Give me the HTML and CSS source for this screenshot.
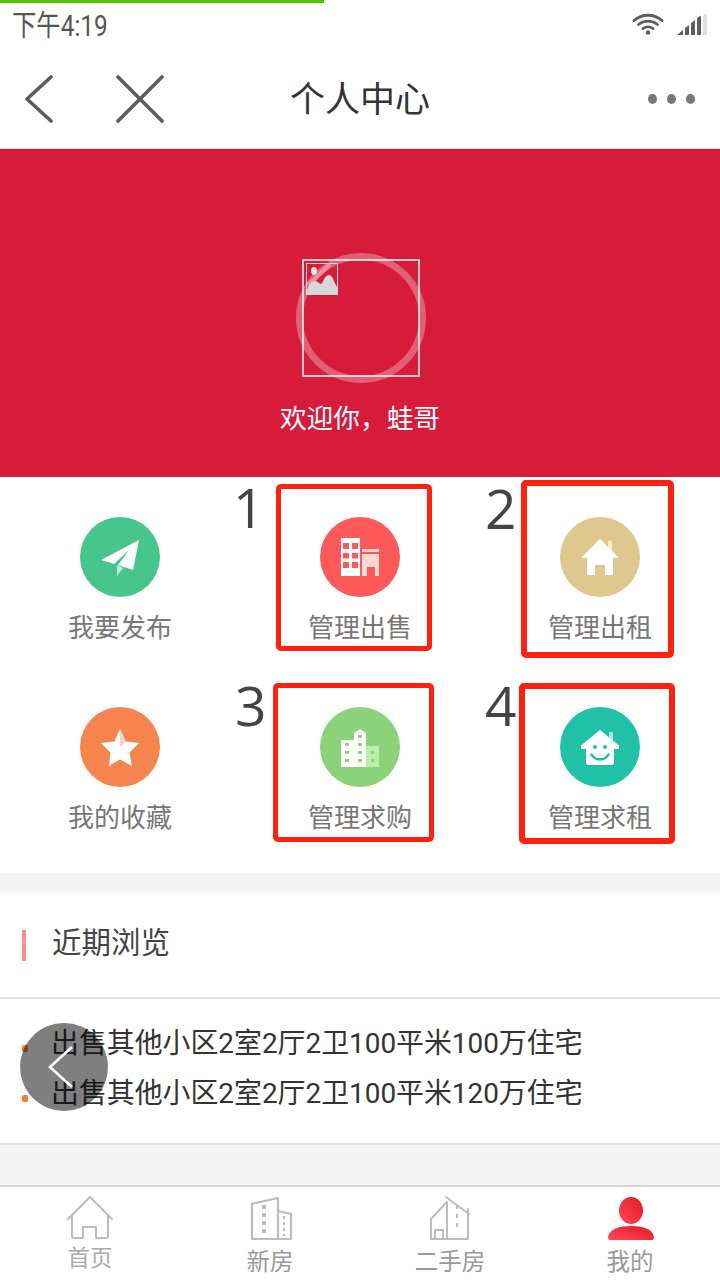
FILE: index.html
```html
<!DOCTYPE html>
<html lang="zh-CN">
<head>
<meta charset="utf-8">
<title>个人中心</title>
<link rel="stylesheet" href="styles.css">
</head>
<body>
<div class="page">
  <div class="progress"></div>
  <div class="status">
    <span class="time">下午4:19</span>
    <div class="status-icons">
      <svg class="wifi" width="32" height="22" viewBox="0 0 32 22"><g fill="none" stroke="#5f5f5f" stroke-width="2.8" stroke-linecap="round"><path d="M2 7.5C10 .5 22 .5 30 7.5"/><path d="M6.5 11.5C12 7 20 7 25.5 11.5"/><path d="M11 15.5C14 13.5 18 13.5 21 15.5"/></g><circle cx="16" cy="19.5" r="2.3" fill="#5f5f5f"/></svg>
      <svg class="signal" width="31" height="21" viewBox="0 0 31 21"><path fill="#5f5f5f" d="M0 21 6 16V21ZM8 21V14L12 11V21ZM14 21V9L18 6V21ZM20 21V4L24 1.5V21Z"/><path fill="#e2e2e2" d="M26 21V0L30 0V21Z"/></svg>
    </div>
  </div>
  <header class="nav">
    <div class="nav-left">
      <svg width="28" height="48" viewBox="0 0 28 48"><path d="M26 2 2 24 26 46" fill="none" stroke="#5c5c5c" stroke-width="3.6" stroke-linecap="round" stroke-linejoin="round"/></svg>
      <svg width="48" height="48" viewBox="0 0 48 48"><path d="M2 2 46 46M46 2 2 46" fill="none" stroke="#5c5c5c" stroke-width="3.6" stroke-linecap="round"/></svg>
    </div>
    <h1 class="nav-title">个人中心</h1>
    <div class="nav-more"><i></i><i></i><i></i></div>
  </header>
  <section class="hero">
    <div class="avatar">
      <div class="avatar-ring"></div>
      <svg class="broken" width="32" height="32" viewBox="0 0 32 32"><rect x=".5" y=".5" width="31" height="31" fill="none" stroke="#d8d8d8"/><path d="M2 22 24 1" stroke="#ef8f9f" stroke-width="4" fill="none"/><path d="M1 31V27C3 22 5 18 9 18 12 18 13 21 15 21 17 21 18 12 23 12 27 12 28 20 31 24V31Z" fill="#d8d8d8"/><ellipse cx="8" cy="8" rx="3" ry="4" fill="#e4e4e4"/></svg>
    </div>
    <p class="welcome">欢迎你，蛙哥</p>
  </section>
  <section class="grid">
    <a class="cell"><span class="ic ic-green"><svg width="80" height="80" viewBox="0 0 80 80"><path fill="#fff" d="M59 23 21 43 34 47 49 33 38 48 53 53Z"/><path fill="#b8eed4" d="M37 48V59L43 51Z"/></svg></span><span class="lbl">我要发布</span></a>
    <a class="cell"><span class="ic ic-red"><svg width="80" height="80" viewBox="0 0 80 80"><path fill="#fff" d="M21 21H40V59H21Z"/><path fill="#ff5858" d="M23 26H29V32H23ZM32 26H38V32H32ZM23 36H29V41.500H23ZM32 36H38V41.500H32ZM23 45H29V51H23ZM32 45H38V51H32Z"/><path fill="#ffd9d0" d="M42 32H59V35H42ZM42 37H59V59H42Z"/><path fill="#ff5858" d="M47 50H55V59H47Z"/></svg></span><span class="lbl">管理出售</span></a>
    <a class="cell"><span class="ic ic-sand"><svg width="80" height="80" viewBox="0 0 80 80"><path fill="#fbeec8" d="M48 24H52V35H48Z"/><path fill="#fff" d="M40 22 59 41H53V58H45V48H35V58H27V41H21Z"/></svg></span><span class="lbl">管理出租</span></a>
    <a class="cell"><span class="ic ic-orange"><svg width="80" height="80" viewBox="0 0 80 80"><path fill="#fff" d="M40 22 45.800 34.500 59 36 49.500 45.500 52 59 40 52.500 29 59 30.500 45.500 21 36 34.500 34.500Z"/><path fill="#fcd3c3" d="M40 22 45.800 34.500 40 40Z"/></svg></span><span class="lbl">我的收藏</span></a>
    <a class="cell"><span class="ic ic-lime"><svg width="80" height="80" viewBox="0 0 80 80"><path fill="#fff" d="M21 33H34V26L40 22 46 26V60H21Z"/><path fill="#b8f0a8" d="M46 39H59V60H46Z"/><path fill="#8bd27a" d="M25 36H29V39H25ZM25 44H29V47H25ZM25 52H29V55H25ZM38 28H42V31H38ZM38 36H42V39H38ZM38 44H42V47H38ZM38 52H42V55H38ZM51 44H54V47H51ZM51 52H54V55H51Z"/></svg></span><span class="lbl">管理求购</span></a>
    <a class="cell"><span class="ic ic-teal"><svg width="80" height="80" viewBox="0 0 80 80"><path fill="#a7ecdc" d="M49 25H53V36H49Z"/><path fill="#fff" d="M40 23 59 38.500V42H54V55A3 3 0 0 1 51 58H29A3 3 0 0 1 26 55V42H21V38.500Z"/><circle cx="35" cy="40" r="2" fill="#20c1a7"/><circle cx="45" cy="40" r="2" fill="#20c1a7"/><path d="M31.500 47.500C35 54 45 54 48.500 47.500" fill="none" stroke="#20c1a7" stroke-width="2.600" stroke-linecap="round"/></svg></span><span class="lbl">管理求租</span></a>
  </section>
  <div class="gap"></div>
  <section class="recent">
    <h2 class="recent-title"><span class="recent-bar"></span><span class="recent-text">近期浏览</span></h2>
    <ul class="recent-list">
      <li class="recent-item"><i class="dot"></i><span class="recent-link">出售其他小区2室2厅2卫100平米100万住宅</span></li>
      <li class="recent-item"><i class="dot"></i><span class="recent-link">出售其他小区2室2厅2卫100平米120万住宅</span></li>
    </ul>
  </section>
  <div class="filler"></div>
  <nav class="tabs">
    <a class="tab">
      <svg width="48" height="46" viewBox="0 0 48 46"><path d="M2 24 24 2 46 24M6 21V41A2 2 0 0 0 8 43H17V32H30V43H40A2 2 0 0 0 42 41V21" fill="none" stroke="#bcbcbc" stroke-width="2" stroke-linejoin="round" stroke-linecap="round"/></svg>
      <span class="tab-lbl-first">首页</span>
    </a>
    <a class="tab">
      <svg width="48" height="46" viewBox="0 0 48 46"><path d="M5 9 32 3V44H6V9M32 16 45 19V44H32" fill="none" stroke="#bcbcbc" stroke-width="2.200" stroke-linejoin="round"/><path d="M18 10V40" stroke="#bcbcbc" stroke-width="4" stroke-dasharray="4 4" fill="none"/><path d="M38 21V41" stroke="#bcbcbc" stroke-width="2" stroke-dasharray="3 3" fill="none"/></svg>
      <span class="tab-lbl">新房</span>
    </a>
    <a class="tab">
      <svg width="48" height="46" viewBox="0 0 48 46"><path d="M5 44V24L21 7V44M5 44H42V14M20 2 43 19M9 44V35H17V44" fill="none" stroke="#bcbcbc" stroke-width="2" stroke-linejoin="round" stroke-linecap="round"/><path d="M31 10V33" stroke="#bcbcbc" stroke-width="2" stroke-dasharray="4 5" fill="none"/></svg>
      <span class="tab-lbl">二手房</span>
    </a>
    <a class="tab">
      <svg width="48" height="46" viewBox="0 0 48 46"><defs><linearGradient id="me" x1="1" y1="0" x2="0" y2="1"><stop offset="0" stop-color="#e5161f"/><stop offset="1" stop-color="#fb4b5e"/></linearGradient></defs><ellipse cx="25" cy="15.500" rx="12" ry="13.500" fill="url(#me)"/><path d="M2 42C3 34 14 31 25 31 36 31 47 34 48 42 48 44 47 45 46 45H4C3 45 2 44 2 42Z" fill="url(#me)"/></svg>
      <span class="tab-lbl">我的</span>
    </a>
  </nav>

  <div class="mark mark-1"></div>
  <div class="mark mark-2"></div>
  <div class="mark mark-3"></div>
  <div class="mark mark-4"></div>
  <span class="num num-1">1</span>
  <span class="num num-2">2</span>
  <span class="num num-3">3</span>
  <span class="num num-4">4</span>
  <div class="float-back">
    <svg width="88" height="88" viewBox="0 0 88 88"><path d="M52 24 30 44 52 64" fill="none" stroke="#fff" stroke-width="2.600"/></svg>
  </div>
</div>
</body>
</html>
```
FILE: styles.css
```css
* { box-sizing: border-box; margin: 0; padding: 0; }
html, body { background: #fff; }
body { font-family: Roboto, "Noto Sans CJK SC", sans-serif; }
.page { position: relative; width: 720px; height: 1280px; overflow: hidden; display: flex; flex-direction: column; background: #fff; }
.progress { position: absolute; left: 0; top: 0; width: 324px; height: 3px; background: #4cc400; }

.status { height: 50px; flex: none; display: flex; justify-content: space-between; align-items: flex-start; padding: 13px 12px 0 12px; }
.time { font-size: 29px; line-height: 26px; color: #555; transform: scaleX(.84); transform-origin: 0 50%; white-space: nowrap; }
.status-icons { display: flex; align-items: flex-start; gap: 13px; }
.signal { margin-top: 1px; }

.nav { height: 99px; flex: none; display: grid; grid-template-columns: 1fr auto 1fr; align-items: center; padding: 0 25px; border-bottom: 1px solid #dcdcdc; }
.nav-left { display: flex; align-items: center; gap: 63px; }
.nav-title { font-size: 35px; font-weight: 400; color: #333; line-height: 48px; margin-top: 4px; }
.nav-more { display: flex; justify-content: flex-end; gap: 10px; }
.nav-more i { width: 9px; height: 10px; border-radius: 50%; background: #777; }

.hero { height: 328px; flex: none; background: #d61b3b; display: flex; flex-direction: column; align-items: center; padding-top: 110px; }
.avatar { position: relative; width: 118px; height: 118px; margin-left: 2px; border: 2px solid #c9c9c9; padding: 2px; }
.avatar-ring { position: absolute; left: -8px; top: -8px; width: 130px; height: 130px; border: 7px solid rgba(255,255,255,.3); border-radius: 50%; }
.broken { display: block; position: relative; }
.welcome { margin-top: 24px; font-size: 26.700px; line-height: 36px; color: #fff; }

.grid { flex: none; display: grid; grid-template-columns: repeat(3, 240px); grid-auto-rows: 190px; height: 396px; }
.cell { display: flex; flex-direction: column; align-items: center; padding-top: 40px; }
.ic { width: 80px; height: 80px; border-radius: 50%; display: block; }
.ic svg { display: block; }
.ic-green { background: #47c58c; }
.ic-red { background: #ff5858; }
.ic-sand { background: #dfc88d; }
.ic-orange { background: #f6844e; }
.ic-lime { background: #8bd27a; }
.ic-teal { background: #20c1a7; }
.lbl { margin-top: 13px; font-size: 26px; line-height: 36px; color: #777; }

.gap { height: 20px; flex: none; background: #f4f4f4; }

.recent-title { height: 106px; display: flex; align-items: center; padding-left: 22px; gap: 26px; font-size: 29.500px; font-weight: 400; color: #444; border-bottom: 2px solid #e0e0e0; }
.recent-bar { width: 4px; height: 31px; margin-top: 1px; background: #ff8a8a; }
.recent-text { margin-top: -10px; }
.recent-list { list-style: none; height: 146px; padding: 19px 0 0 22px; border-bottom: 2px solid #e0e0e0; }
.recent-item { display: flex; align-items: center; height: 50px; font-size: 27.900px; color: #333; white-space: nowrap; }
.recent-link { margin-top: -4px; margin-left: -1px; }
.dot { width: 6px; height: 7px; margin-right: 24px; margin-top: 10px; border-radius: 2px; background: #ff7a26; flex: none; }

.filler { flex: 1; background: #f4f4f4; }

.tabs { flex: none; height: 95px; display: grid; grid-template-columns: repeat(4, 180px); border-top: 2px solid #d5d5d5; background: #fff; }
.tab { display: flex; flex-direction: column; align-items: center; padding-top: 8px; }
.tab svg { display: block; }
.tab-lbl { font-size: 23.500px; line-height: 34px; margin-top: 4px; color: #999; }
.tab-lbl-first { display: block; margin-top: 0; font-size: 22.500px; line-height: 34px; white-space: nowrap; color: #aaa; }

.mark { position: absolute; border-style: solid; border-color: #ff2010; border-radius: 5px; }
.mark-1 { left: 276px; top: 484px; width: 156px; height: 167px; border-width: 5px; }
.mark-2 { left: 521px; top: 480px; width: 153px; height: 178px; border-width: 6px; }
.mark-3 { left: 273px; top: 683px; width: 161px; height: 159px; border-width: 5px; }
.mark-4 { left: 519px; top: 683px; width: 156px; height: 161px; border-width: 6px; }

.num { position: absolute; font-family: "Open Sans", sans-serif; font-size: 55px; line-height: 56px; color: #444; }
.num-1 { left: 233px; top: 479px; }
.num-2 { left: 485px; top: 480px; }
.num-3 { left: 235px; top: 677px; }
.num-4 { left: 485px; top: 677px; }

.float-back { position: absolute; left: 20px; top: 1023px; width: 88px; height: 88px; border-radius: 50%; background: rgba(0,0,0,.5); }
.float-back svg { display: block; }
```
